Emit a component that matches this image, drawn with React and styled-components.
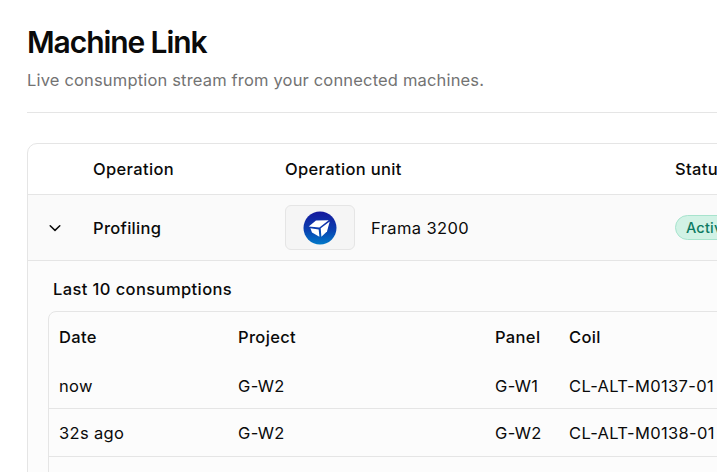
import React from 'react';
import styled, { createGlobalStyle } from 'styled-components';

const consumptions = [
  { date: 'now', project: 'G-W2', panel: 'G-W1', coil: 'CL-ALT-M0137-01' },
  { date: '32s ago', project: 'G-W2', panel: 'G-W2', coil: 'CL-ALT-M0138-01' },
  { date: '', project: '', panel: '', coil: '' },
];

function Chevron() {
  return (
    <svg width="16" height="16" viewBox="0 0 16 16" fill="none" stroke="#0a0a0a" strokeWidth="1.5" strokeLinecap="round" strokeLinejoin="round">
      <path d="M3.2 5.8 8 10.4l4.8-4.6" />
    </svg>
  );
}

function MachineLogo() {
  return (
    <svg width="34" height="34" viewBox="0 0 34 34">
      <defs>
        <linearGradient id="logoFill" x1="0" y1="0" x2="0" y2="1">
          <stop offset="0" stopColor="#15189c" />
          <stop offset="0.55" stopColor="#0a3fb0" />
          <stop offset="1" stopColor="#0079c8" />
        </linearGradient>
      </defs>
      <circle cx="17" cy="17" r="16.5" fill="url(#logoFill)" />
      <path d="M5.7 15.5 13 9.5 25.7 9.2 16.4 16.5Z" fill="#fff" />
      <path d="M26.7 10.5 24 20.5 18.4 25.8 17.7 17.2Z" fill="#fff" />
      <path d="M7.4 17.2 15.7 18.5 16.4 25.8 9 21.5Z" fill="#fff" />
    </svg>
  );
}

function App() {
  return (
    <Page>
      <GlobalStyle />
      <Title>Machine Link</Title>
      <Subtitle>Live consumption stream from your connected machines.</Subtitle>
      <Divider />
      <Card>
        <HeadRow>
          <span />
          <HeadCell>Operation</HeadCell>
          <HeadCell>Operation unit</HeadCell>
          <HeadCell>Status</HeadCell>
        </HeadRow>
        <MachineRow>
          <ChevronCell>
            <Chevron />
          </ChevronCell>
          <OperationName>Profiling</OperationName>
          <Unit>
            <LogoBox>
              <MachineLogo />
            </LogoBox>
            <UnitName>Frama 3200</UnitName>
          </Unit>
          <div>
            <Badge>Active</Badge>
          </div>
        </MachineRow>
        <Expanded>
          <SectionTitle>Last 10 consumptions</SectionTitle>
          <InnerTable>
            <InnerHead>
              <span>Date</span>
              <span>Project</span>
              <span>Panel</span>
              <span>Coil</span>
            </InnerHead>
            {consumptions.map((row, i) => (
              <InnerRow key={i}>
                <span>{row.date}</span>
                <span>{row.project}</span>
                <span>{row.panel}</span>
                <span>{row.coil}</span>
              </InnerRow>
            ))}
          </InnerTable>
        </Expanded>
      </Card>
    </Page>
  );
}

const GlobalStyle = createGlobalStyle`
  html, body {
    margin: 0;
    height: 100%;
    overflow: hidden;
    background: #fff;
  }
  body {
    font-family: Inter, "Liberation Sans", sans-serif;
    color: #0a0a0a;
  }
`;

const Page = styled.div`
  width: 900px;
  height: 472px;
  box-sizing: border-box;
  padding: 24px 0 0 27px;
  overflow: hidden;
`;
const Title = styled.h1`
  margin: 0;
  font-size: 30px;
  line-height: 36px;
  font-weight: 600;
  letter-spacing: -1.08px;
  color: #0a0a0a;
`;
const Subtitle = styled.p`
  margin: 8px 0 0;
  font-size: 16.5px;
  line-height: 24px;
  letter-spacing: 0.17px;
  color: #737373;
`;
const Divider = styled.div`
  margin-top: 20px;
  height: 1px;
  background: #e5e5e5;
`;
const Card = styled.div`
  margin-top: 30px;
  border: 1px solid #e5e5e5;
  border-radius: 10px;
  overflow: hidden;
`;
const outerColumns = '65px 192px 390px 1fr';
const HeadRow = styled.div`
  display: grid;
  grid-template-columns: ${outerColumns};
  align-items: center;
  height: 50px;
  border-bottom: 1px solid #e5e5e5;
`;
const HeadCell = styled.span`
  font-size: 16.5px;
  font-weight: 500;
  letter-spacing: 0.35px;
`;
const MachineRow = styled.div`
  display: grid;
  grid-template-columns: ${outerColumns};
  align-items: center;
  height: 65px;
  background: #fafafa;
  border-bottom: 1px solid #e5e5e5;
`;
const ChevronCell = styled.div`
  display: flex;
  padding-left: 19px;
`;
const OperationName = styled.span`
  font-size: 16.5px;
  font-weight: 500;
  letter-spacing: 0.3px;
`;
const Unit = styled.div`
  display: flex;
  align-items: center;
  gap: 16px;
`;
const LogoBox = styled.div`
  display: flex;
  align-items: center;
  justify-content: center;
  width: 70px;
  height: 45px;
  box-sizing: border-box;
  border: 1px solid #e5e5e5;
  border-radius: 6px;
  background: #f5f5f5;
`;
const UnitName = styled.span`
  font-size: 16.5px;
  letter-spacing: 0.4px;
`;
const Badge = styled.span`
  display: inline-flex;
  align-items: center;
  height: 25px;
  box-sizing: border-box;
  padding: 0 10px;
  border: 1px solid #a7e3cd;
  border-radius: 999px;
  background: #d1f2e5;
  color: #0b7a62;
  font-size: 14.5px;
  font-weight: 500;
  letter-spacing: 0.2px;
`;
const Expanded = styled.div`
  padding: 16px 0 0 20px;
  background: #fcfcfc;
`;
const SectionTitle = styled.div`
  padding-left: 5px;
  font-size: 16.5px;
  line-height: 24px;
  font-weight: 500;
  letter-spacing: 0.4px;
`;
const InnerTable = styled.div`
  margin-top: 10px;
  border: 1px solid #e5e5e5;
  border-radius: 8px;
`;
const innerColumns = '179px 257px 74px 1fr';
const InnerHead = styled.div`
  display: grid;
  grid-template-columns: ${innerColumns};
  align-items: center;
  height: 49px;
  box-sizing: border-box;
  padding: 1px 0 0 10px;
  font-size: 16.5px;
  font-weight: 500;
  letter-spacing: 0.35px;
`;
const InnerRow = styled.div`
  display: grid;
  grid-template-columns: ${innerColumns};
  align-items: center;
  height: 48px;
  box-sizing: border-box;
  padding: 1px 0 0 10px;
  font-size: 16.5px;
  letter-spacing: 0.33px;
  border-bottom: 1px solid #e5e5e5;

  ${InnerHead} + & {
    padding-top: 2px;
  }
`;

export default App;
